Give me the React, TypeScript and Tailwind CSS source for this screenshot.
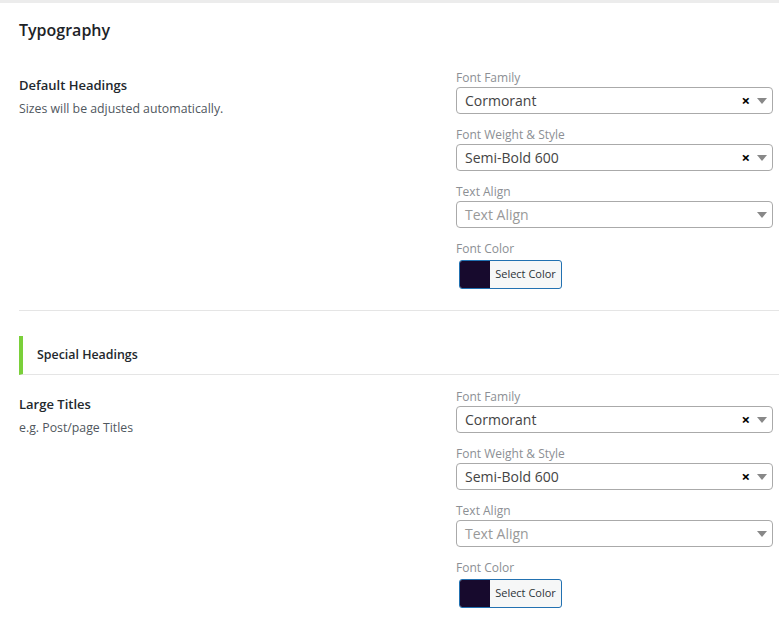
const font = { fontFamily: '"Open Sans", "Noto Sans", sans-serif' };

const Select = ({
  label,
  value,
  clearable = true,
}: {
  label: string;
  value?: string;
  clearable?: boolean;
}) => (
  <div className="mb-[13px]">
    <div className="mb-px text-[12px] leading-4 text-[#8c8f94]">{label}</div>
    <div className="flex h-[27px] items-center rounded-[4px] border border-[#aaaaaa] bg-white pl-[8px] pr-[5px]">
      <span
        className={
          "flex-1 text-[14px] leading-5 " +
          (value ? "text-[#444444]" : "text-[#999999]")
        }
      >
        {value ?? label}
      </span>
      {clearable && (
        <span className="mr-[7px] text-[15px] font-bold leading-none text-black">
          ×
        </span>
      )}
      <svg width="10" height="6" viewBox="0 0 10 6">
        <path d="M0 0h10L5 6z" fill="#888888" />
      </svg>
    </div>
  </div>
);

const ColorPicker = () => (
  <div>
    <div className="mb-[3px] text-[12px] leading-4 text-[#8c8f94]">
      Font Color
    </div>
    <button className="ml-[3px] flex h-[29px] w-[103px] overflow-hidden rounded-[3px] border border-[#2271b1] bg-[#f6f7f7]">
      <span className="h-full w-[30px] bg-[#170a2d]" />
      <span className="flex flex-1 items-center justify-center text-[11px] text-[#2c3338]">
        Select Color
      </span>
    </button>
  </div>
);

const Row = ({ title, description }: { title: string; description: string }) => (
  <div className="flex pr-[6px]">
    <div className="w-[437px] pt-[5px]">
      <div className="text-[13px] font-semibold leading-5 text-[#23282d]">
        {title}
      </div>
      <div className="mt-[4px] text-[12.3px] leading-5 text-[#50575e]">
        {description}
      </div>
    </div>
    <div className="flex-1">
      <Select label="Font Family" value="Cormorant" />
      <Select label="Font Weight & Style" value="Semi-Bold 600" />
      <Select label="Text Align" clearable={false} />
      <ColorPicker />
    </div>
  </div>
);

export default function App() {
  return (
    <div
      className="min-h-[626px] border-t-[3px] border-[#ececec] bg-white"
      style={font}
    >
      <div className="ml-[19px]">
        <h2 className="pt-[15px] text-[16px] font-semibold leading-6 text-[#1d2327]">
          Typography
        </h2>
        <div className="mt-[28px] border-b border-[#e5e5e5] pb-[21px]">
          <Row
            title="Default Headings"
            description="Sizes will be adjusted automatically."
          />
        </div>
        <div className="mt-[25px] flex h-[39px] items-center border-b border-[#e5e5e5] border-l-[4px] border-l-[#7ad03a] pl-[14px]">
          <span className="text-[12.4px] font-semibold text-[#23282d]">
            Special Headings
          </span>
        </div>
        <div className="mt-[14px]">
          <Row title="Large Titles" description="e.g. Post/page Titles" />
        </div>
      </div>
    </div>
  );
}
